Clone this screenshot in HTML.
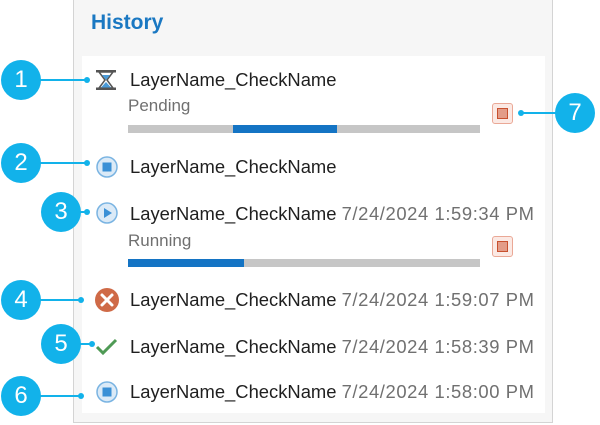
<!DOCTYPE html>
<html><head><meta charset="utf-8"><style>
body{margin:0;width:600px;height:425px;background:#fff;position:relative;overflow:hidden;font-family:"Liberation Sans",sans-serif;}
.panel{position:absolute;left:73px;top:-1px;width:480px;height:424px;border:1px solid #d4d4d4;background:#f6f6f6;box-sizing:border-box;}
.inner{position:absolute;left:82px;top:56px;width:463px;height:357px;background:#fff;}
.t{position:absolute;white-space:nowrap;font-size:18.4px;color:#1f1f1f;line-height:20px;}
.g{color:#707070;}
.d{color:#707070;letter-spacing:0.6px;}
.bar{position:absolute;height:8px;background:#c6c6c6;left:128px;width:352px;}
.bar i{position:absolute;top:0;height:8px;background:#1474c4;}
.stop{position:absolute;width:21px;height:21px;border:1.5px solid #eaa896;border-radius:3px;background:#fbe9e4;box-sizing:border-box;}
.stop:after{content:"";position:absolute;left:3.5px;top:3.5px;width:11px;height:11px;background:#e39c88;border:1.5px solid #c8502e;box-sizing:border-box;}
.c{position:absolute;width:40px;height:40px;border-radius:50%;background:#12b2ea;color:#fff;font-size:24px;line-height:40px;text-align:center;}
.ln{position:absolute;height:2px;background:#12b2ea;}
.dot{position:absolute;width:6px;height:6px;border-radius:50%;background:#12b2ea;}
</style></head><body>
<div class="panel"></div>
<div class="inner"></div>
<div class="t" style="left:91px;top:13px;font-size:21px;font-weight:bold;color:#1a78c2;">History</div>

<svg style="position:absolute;left:0;top:0" width="600" height="425">
<g transform="translate(106,80)">
<rect x="-10" y="-10" width="20" height="2.5" fill="#555"/>
<rect x="-10" y="7.5" width="20" height="2.5" fill="#555"/>
<path d="M-7 -8 L7 -8 L1 0 L7 8 L-7 8 L-1 0 Z" fill="none" stroke="#555" stroke-width="1.5"/>
<path d="M-4 -5 L4 -5 L0 0 Z M0 2 L5 7.5 L-5 7.5 Z" fill="#4a9ad8"/>
</g>
<g transform="translate(107,167)"><circle r="10" fill="#dbeaf7" stroke="#7ab4e2" stroke-width="1.5"/><rect x="-4.5" y="-4.5" width="9" height="9" fill="#3a90d6"/></g>
<g transform="translate(107,392)"><circle r="10" fill="#dbeaf7" stroke="#7ab4e2" stroke-width="1.5"/><rect x="-4.5" y="-4.5" width="9" height="9" fill="#3a90d6"/></g>
<g transform="translate(107,213)"><circle r="10" fill="#dbeaf7" stroke="#7ab4e2" stroke-width="1.5"/><path d="M-3 -5 L5 0 L-3 5 Z" fill="#3a90d6"/></g>
<g transform="translate(107,300)"><circle r="12" fill="#cf6a47"/><path d="M-5 -5 L5 5 M5 -5 L-5 5" stroke="#fff" stroke-width="3" stroke-linecap="round"/></g>
<path d="M97 347 L103 353 L116 340" fill="none" stroke="#4f9a55" stroke-width="3"/>
</svg>

<div class="t" style="left:130px;top:70px;">LayerName_CheckName</div>
<div class="t g" style="left:128px;top:96px;font-size:17px;">Pending</div>
<div class="bar" style="top:125px;"><i style="left:105px;width:104px;"></i></div>
<div class="stop" style="left:492px;top:103px;"></div>

<div class="t" style="left:130px;top:157px;">LayerName_CheckName</div>

<div class="t" style="left:130px;top:204px;">LayerName_CheckName <span class="d">7/24/2024 1:59:34 PM</span></div>
<div class="t g" style="left:128px;top:231px;font-size:17px;">Running</div>
<div class="bar" style="top:259px;"><i style="left:0;width:116px;"></i></div>
<div class="stop" style="left:492px;top:236px;"></div>

<div class="t" style="left:130px;top:290px;">LayerName_CheckName <span class="d">7/24/2024 1:59:07 PM</span></div>
<div class="t" style="left:130px;top:337px;">LayerName_CheckName <span class="d">7/24/2024 1:58:39 PM</span></div>
<div class="t" style="left:130px;top:382px;">LayerName_CheckName <span class="d">7/24/2024 1:58:00 PM</span></div>

<div class="ln" style="left:40px;top:79px;width:47px;"></div><div class="dot" style="left:84px;top:77px;"></div><div class="c" style="left:1px;top:60px;">1</div>
<div class="ln" style="left:40px;top:162px;width:47px;"></div><div class="dot" style="left:84px;top:160px;"></div><div class="c" style="left:1px;top:143px;">2</div>
<div class="ln" style="left:80px;top:211px;width:8px;"></div><div class="dot" style="left:84px;top:209px;"></div><div class="c" style="left:41px;top:192px;">3</div>
<div class="ln" style="left:40px;top:299px;width:42px;"></div><div class="dot" style="left:78px;top:297px;"></div><div class="c" style="left:1px;top:280px;">4</div>
<div class="ln" style="left:80px;top:343px;width:12px;"></div><div class="dot" style="left:89px;top:341px;"></div><div class="c" style="left:41px;top:324px;">5</div>
<div class="ln" style="left:40px;top:395px;width:42px;"></div><div class="dot" style="left:78px;top:393px;"></div><div class="c" style="left:1px;top:376px;">6</div>
<div class="ln" style="left:522px;top:112px;width:36px;"></div><div class="dot" style="left:518px;top:110px;"></div><div class="c" style="left:555px;top:93px;">7</div>
</body></html>
